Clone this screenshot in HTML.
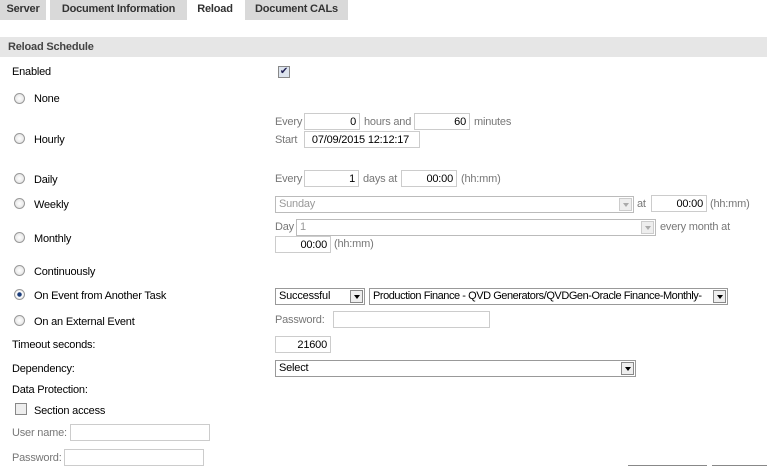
<!DOCTYPE html>
<html><head><style>
body{margin:0;width:767px;height:468px;overflow:hidden;background:#fff;font-family:"Liberation Sans",sans-serif;font-size:11px;color:#000;position:relative;letter-spacing:-0.2px}
div,span{position:absolute}
.t{white-space:nowrap;line-height:13px}
.g{color:#777}
.tab{top:0;height:20px;background:#d9d9d9;font-weight:bold;color:#333;line-height:18px;text-align:center}
.in{border:1px solid #ccc;background:#fff;box-sizing:border-box;text-align:right;line-height:16px;padding-right:3px;height:17px;white-space:nowrap}
.sel{border:1px solid #999;height:17px;box-sizing:border-box;line-height:15px;padding-left:3px;background:#fff;white-space:nowrap;overflow:hidden}
.sel.dis{border-color:#bbb;color:#999}
.arr{right:1px;top:1px;width:13px;height:13px;border:1px solid #888;box-sizing:border-box;background:#eee}
.arr:after{content:"";position:absolute;left:3px;top:4px;border-left:3px solid transparent;border-right:3px solid transparent;border-top:4px solid #000}
.dis .arr{border-color:#ccc}.dis .arr:after{border-top-color:#aaa}
.rad{width:11px;height:11px;border:1px solid #999;border-radius:50%;background:radial-gradient(#fff,#ddd);box-sizing:border-box}
.cb{width:12px;height:12px;border:1px solid #888;box-sizing:border-box;background:#eee}
</style></head><body>
<div class="tab" style="left:0;width:46px">Server</div>
<div class="tab" style="left:50px;width:137px">Document Information</div>
<div class="tab" style="left:187px;width:56px;background:#fff">Reload</div>
<div class="tab" style="left:245px;width:103px">Document CALs</div>
<div style="left:0;top:37px;width:767px;height:20px;background:#e6e6e6"></div>
<div class="t" style="left:8px;top:41px;font-weight:bold;color:#444">Reload Schedule</div>

<div class="t" style="left:12px;top:66px">Enabled</div>
<div class="cb" style="left:278px;top:66px;background:#dde4ee;color:#225;font-size:10px;line-height:10px;text-align:center">✔</div>

<div class="rad" style="left:14px;top:93px"></div><div class="t" style="left:34px;top:93px">None</div>
<div class="rad" style="left:14px;top:133px"></div><div class="t" style="left:34px;top:134px">Hourly</div>
<div class="t g" style="left:275px;top:116px">Every</div>
<div class="in" style="left:304px;top:113px;width:56px">0</div>
<div class="t g" style="left:364px;top:116px">hours and</div>
<div class="in" style="left:414px;top:113px;width:56px">60</div>
<div class="t g" style="left:474px;top:116px">minutes</div>
<div class="t g" style="left:275px;top:134px">Start</div>
<div class="in" style="left:304px;top:131px;width:116px;text-align:center">07/09/2015 12:12:17</div>

<div class="rad" style="left:14px;top:173px"></div><div class="t" style="left:34px;top:174px">Daily</div>
<div class="t g" style="left:275px;top:173px">Every</div>
<div class="in" style="left:304px;top:170px;width:55px">1</div>
<div class="t g" style="left:363px;top:173px">days at</div>
<div class="in" style="left:401px;top:170px;width:56px">00:00</div>
<div class="t g" style="left:461px;top:173px">(hh:mm)</div>

<div class="rad" style="left:14px;top:198px"></div><div class="t" style="left:34px;top:199px">Weekly</div>
<div class="sel dis" style="left:275px;top:196px;width:359px">Sunday<span class="arr"></span></div>
<div class="t g" style="left:637px;top:198px">at</div>
<div class="in" style="left:651px;top:195px;width:56px">00:00</div>
<div class="t g" style="left:710px;top:198px">(hh:mm)</div>

<div class="rad" style="left:14px;top:232px"></div><div class="t" style="left:34px;top:233px">Monthly</div>
<div class="t g" style="left:275px;top:221px">Day</div>
<div class="sel dis" style="left:296px;top:219px;width:360px">1<span class="arr"></span></div>
<div class="t g" style="left:660px;top:221px">every month at</div>
<div class="in" style="left:275px;top:236px;width:56px">00:00</div>
<div class="t g" style="left:334px;top:238px">(hh:mm)</div>

<div class="rad" style="left:14px;top:265px"></div><div class="t" style="left:34px;top:266px">Continuously</div>
<div class="rad" style="left:14px;top:289px;background:radial-gradient(#1a3c7a 30%,#fff 40%,#ddd)"></div><div class="t" style="left:34px;top:290px">On Event from Another Task</div>
<div class="sel" style="left:275px;top:288px;width:90px">Successful<span class="arr"></span></div>
<div class="sel" style="left:369px;top:288px;width:359px;padding-right:16px;letter-spacing:-0.45px">Production Finance - QVD Generators/QVDGen-Oracle Finance-Monthly-<span class="arr"></span></div>
<div class="rad" style="left:14px;top:315px"></div><div class="t" style="left:34px;top:316px">On an External Event</div>
<div class="t g" style="left:275px;top:314px">Password:</div>
<div class="in" style="left:333px;top:311px;width:157px"></div>

<div class="t" style="left:12px;top:339px">Timeout seconds:</div>
<div class="in" style="left:275px;top:336px;width:56px">21600</div>
<div class="t" style="left:12px;top:363px">Dependency:</div>
<div class="sel" style="left:275px;top:360px;width:361px">Select<span class="arr"></span></div>
<div class="t" style="left:12px;top:384px">Data Protection:</div>
<div class="cb" style="left:15px;top:403px"></div><div class="t" style="left:34px;top:405px">Section access</div>
<div class="t g" style="left:12px;top:427px">User name:</div>
<div class="in" style="left:70px;top:424px;width:140px"></div>
<div class="t g" style="left:12px;top:452px">Password:</div>
<div class="in" style="left:64px;top:449px;width:140px"></div>
<div style="left:628px;top:465px;width:79px;height:3px;border-top:1px solid #888"></div>
<div style="left:712px;top:465px;width:55px;height:3px;border-top:1px solid #888"></div>
</body></html>
